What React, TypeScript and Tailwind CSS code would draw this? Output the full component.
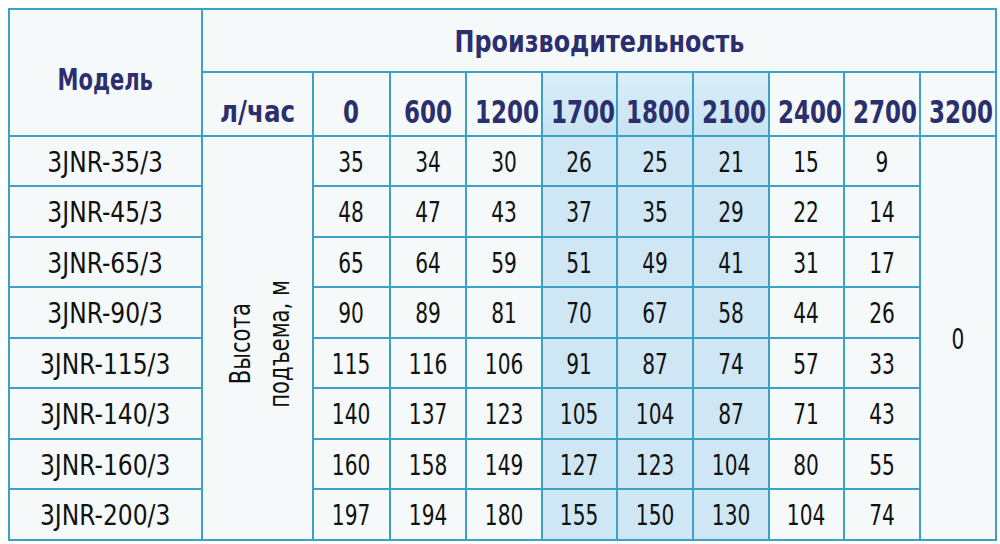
import type { ReactNode } from "react";

const flows = ["0", "600", "1200", "1700", "1800", "2100", "2400", "2700"];

const rows: { model: string; values: number[] }[] = [
  { model: "3JNR-35/3", values: [35, 34, 30, 26, 25, 21, 15, 9] },
  { model: "3JNR-45/3", values: [48, 47, 43, 37, 35, 29, 22, 14] },
  { model: "3JNR-65/3", values: [65, 64, 59, 51, 49, 41, 31, 17] },
  { model: "3JNR-90/3", values: [90, 89, 81, 70, 67, 58, 44, 26] },
  { model: "3JNR-115/3", values: [115, 116, 106, 91, 87, 74, 57, 33] },
  { model: "3JNR-140/3", values: [140, 137, 123, 105, 104, 87, 71, 43] },
  { model: "3JNR-160/3", values: [160, 158, 149, 127, 123, 104, 80, 55] },
  { model: "3JNR-200/3", values: [197, 194, 180, 155, 150, 130, 104, 74] },
];

// columns 1700 / 1800 / 2100 are shaded
const shaded = [3, 4, 5];

const font = {
  fontFamily:
    '"Liberation Sans Narrow", "DejaVu Sans Condensed", "Liberation Sans", sans-serif',
};

const cell = "border-2 border-[#3ba2c6] text-center align-middle p-0 whitespace-nowrap";
const head = "font-bold text-[#2b2f6e] leading-none";

// the source uses a condensed face; squeeze the available one to match
function Narrow({ className, children }: { className: string; children: ReactNode }) {
  return <span className={`inline-block ${className}`}>{children}</span>;
}

export default function App() {
  return (
    <div className="min-h-screen bg-white pl-[8px] pt-[8px]" style={font}>
      <table className="table-fixed border-collapse w-[987px] bg-[#f6f9f9]">
        <colgroup>
          <col className="w-[193px]" />
          <col className="w-[111px]" />
          <col className="w-[77px]" />
          <col className="w-[76px]" />
          <col className="w-[76px]" />
          <col className="w-[75px]" />
          <col className="w-[76px]" />
          <col className="w-[76px]" />
          <col className="w-[75px]" />
          <col className="w-[76px]" />
          <col className="w-[76px]" />
        </colgroup>
        <thead>
          <tr className="h-[63px]">
            <th rowSpan={2} className={`${cell} ${head} text-[30px] pt-[14px]`}>
              <Narrow className="scale-x-[0.78]">Модель</Narrow>
            </th>
            <th colSpan={10} className={`${cell} ${head} text-[31px] pt-[2px]`}>
              <Narrow className="scale-x-[0.855]">Производительность</Narrow>
            </th>
          </tr>
          <tr className="h-[64px]">
            <th className={`${cell} ${head} text-[31px] pt-[15px]`}>
              <Narrow className="scale-x-[0.88]">л/час</Narrow>
            </th>
            {flows.map((f, i) => (
              <th
                key={f}
                className={`${cell} ${head} text-[32px] pt-[15px] ${
                  shaded.includes(i)
                    ? "bg-gradient-to-b from-[#d9eef9] to-[#c8e3f3]"
                    : ""
                }`}
              >
                <Narrow className="scale-x-[0.8]">{f}</Narrow>
              </th>
            ))}
            <th className={`${cell} ${head} text-[32px] pt-[15px]`}>
              <Narrow className="scale-x-[0.8]">3200</Narrow>
            </th>
          </tr>
        </thead>
        <tbody className="text-[28px] text-[#111111]">
          {rows.map((r, ri) => (
            <tr key={r.model} className={ri % 2 === 0 ? "h-[50px]" : "h-[51px]"}>
              <td className={`${cell} pt-[3px]`}>
                <Narrow className="scale-x-[0.93]">{r.model}</Narrow>
              </td>
              {ri === 0 && (
                <td rowSpan={8} className={cell}>
                  <div className="mx-auto pr-[18px] pb-[14px] leading-[39px] [writing-mode:vertical-rl] rotate-180 scale-y-[0.84]">
                    Высота
                    <br />
                    подъема, м
                  </div>
                </td>
              )}
              {r.values.map((v, vi) => (
                <td
                  key={vi}
                  className={`${cell} pt-[3px] ${
                    shaded.includes(vi) ? "bg-[#cfe7f4]" : ""
                  }`}
                >
                  <Narrow className="scale-x-[0.8]">{v}</Narrow>
                </td>
              ))}
              {ri === 0 && (
                <td rowSpan={8} className={`${cell} pt-[4px]`}>
                  <Narrow className="scale-x-[0.8]">0</Narrow>
                </td>
              )}
            </tr>
          ))}
        </tbody>
      </table>
    </div>
  );
}
